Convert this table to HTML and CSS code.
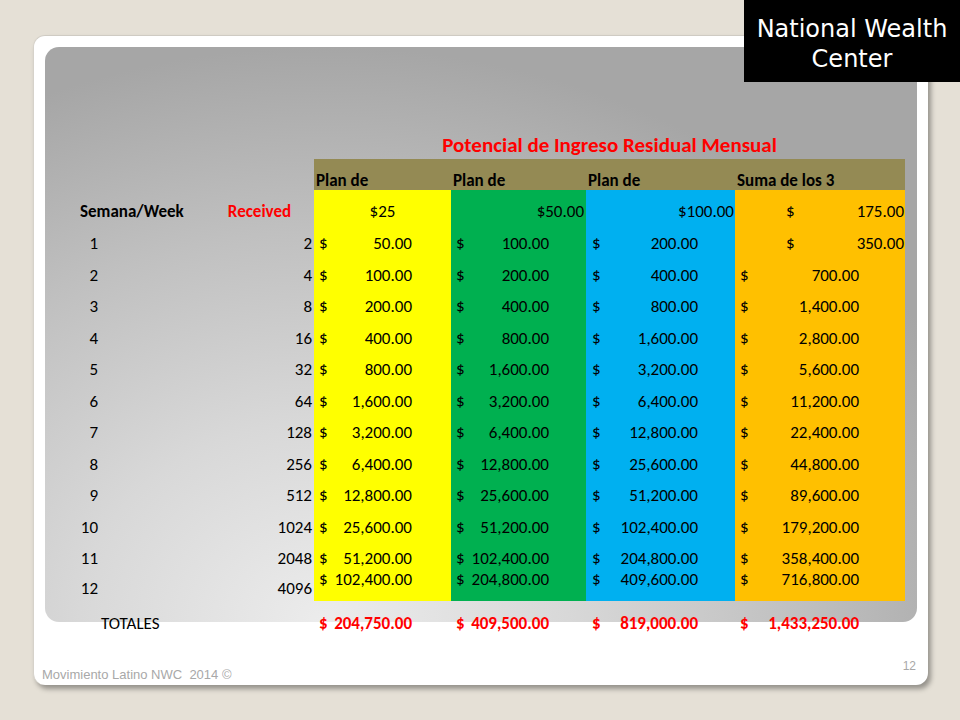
FILE: index.html
```html
<!DOCTYPE html>
<html>
<head>
<meta charset="utf-8">
<link rel="stylesheet" href="styles.css">
</head>
<body>
<div class="logo">National Wealth<br>Center</div>
<div class="card">
  <div class="panel">
    <table class="grid">
      <colgroup>
        <col class="c-a"><col class="c-b"><col class="c-y"><col class="c-g"><col class="c-bl"><col class="c-o">
      </colgroup>
      <tr class="r-title">
        <td></td><td></td>
        <td colspan="4" class="title">Potencial de Ingreso Residual Mensual</td>
      </tr>
      <tr class="r-head">
        <td></td><td></td>
        <td class="olive">Plan de</td>
        <td class="olive">Plan de</td>
        <td class="olive">Plan de</td>
        <td class="olive">Suma de los 3</td>
      </tr>
      <tr class="r-sub">
        <td class="lab-a bold">Semana/Week</td>
        <td class="lab-b bold red ctr">Received</td>
        <td class="y ctr">$25</td>
        <td class="g rgt">$50.00</td>
        <td class="bl rgt">$100.00</td>
        <td class="o"><div class="m wide"><span>$</span><span>175.00</span></div></td>
      </tr>
      <tr class="r">
        <td class="lab-a">1</td><td class="lab-b">2</td>
        <td class="y"><div class="m">$<span>50.00</span></div></td>
        <td class="g"><div class="m">$<span>100.00</span></div></td>
        <td class="bl"><div class="m">$<span>200.00</span></div></td>
        <td class="o"><div class="m wide">$<span>350.00</span></div></td>
      </tr>
      <tr class="r">
        <td class="lab-a">2</td><td class="lab-b">4</td>
        <td class="y"><div class="m">$<span>100.00</span></div></td>
        <td class="g"><div class="m">$<span>200.00</span></div></td>
        <td class="bl"><div class="m">$<span>400.00</span></div></td>
        <td class="o"><div class="m">$<span>700.00</span></div></td>
      </tr>
      <tr class="r">
        <td class="lab-a">3</td><td class="lab-b">8</td>
        <td class="y"><div class="m">$<span>200.00</span></div></td>
        <td class="g"><div class="m">$<span>400.00</span></div></td>
        <td class="bl"><div class="m">$<span>800.00</span></div></td>
        <td class="o"><div class="m">$<span>1,400.00</span></div></td>
      </tr>
      <tr class="r">
        <td class="lab-a">4</td><td class="lab-b">16</td>
        <td class="y"><div class="m">$<span>400.00</span></div></td>
        <td class="g"><div class="m">$<span>800.00</span></div></td>
        <td class="bl"><div class="m">$<span>1,600.00</span></div></td>
        <td class="o"><div class="m">$<span>2,800.00</span></div></td>
      </tr>
      <tr class="r">
        <td class="lab-a">5</td><td class="lab-b">32</td>
        <td class="y"><div class="m">$<span>800.00</span></div></td>
        <td class="g"><div class="m">$<span>1,600.00</span></div></td>
        <td class="bl"><div class="m">$<span>3,200.00</span></div></td>
        <td class="o"><div class="m">$<span>5,600.00</span></div></td>
      </tr>
      <tr class="r">
        <td class="lab-a">6</td><td class="lab-b">64</td>
        <td class="y"><div class="m">$<span>1,600.00</span></div></td>
        <td class="g"><div class="m">$<span>3,200.00</span></div></td>
        <td class="bl"><div class="m">$<span>6,400.00</span></div></td>
        <td class="o"><div class="m">$<span>11,200.00</span></div></td>
      </tr>
      <tr class="r">
        <td class="lab-a">7</td><td class="lab-b">128</td>
        <td class="y"><div class="m">$<span>3,200.00</span></div></td>
        <td class="g"><div class="m">$<span>6,400.00</span></div></td>
        <td class="bl"><div class="m">$<span>12,800.00</span></div></td>
        <td class="o"><div class="m">$<span>22,400.00</span></div></td>
      </tr>
      <tr class="r">
        <td class="lab-a">8</td><td class="lab-b">256</td>
        <td class="y"><div class="m">$<span>6,400.00</span></div></td>
        <td class="g"><div class="m">$<span>12,800.00</span></div></td>
        <td class="bl"><div class="m">$<span>25,600.00</span></div></td>
        <td class="o"><div class="m">$<span>44,800.00</span></div></td>
      </tr>
      <tr class="r">
        <td class="lab-a">9</td><td class="lab-b">512</td>
        <td class="y"><div class="m">$<span>12,800.00</span></div></td>
        <td class="g"><div class="m">$<span>25,600.00</span></div></td>
        <td class="bl"><div class="m">$<span>51,200.00</span></div></td>
        <td class="o"><div class="m">$<span>89,600.00</span></div></td>
      </tr>
      <tr class="r">
        <td class="lab-a">10</td><td class="lab-b">1024</td>
        <td class="y"><div class="m">$<span>25,600.00</span></div></td>
        <td class="g"><div class="m">$<span>51,200.00</span></div></td>
        <td class="bl"><div class="m">$<span>102,400.00</span></div></td>
        <td class="o"><div class="m">$<span>179,200.00</span></div></td>
      </tr>
      <tr class="r">
        <td class="lab-a">11</td><td class="lab-b">2048</td>
        <td class="y"><div class="m">$<span>51,200.00</span></div></td>
        <td class="g"><div class="m">$<span>102,400.00</span></div></td>
        <td class="bl"><div class="m">$<span>204,800.00</span></div></td>
        <td class="o"><div class="m">$<span>358,400.00</span></div></td>
      </tr>
      <tr class="r r-last">
        <td class="lab-a">12</td><td class="lab-b">4096</td>
        <td class="y top"><div class="m">$<span>102,400.00</span></div></td>
        <td class="g top"><div class="m">$<span>204,800.00</span></div></td>
        <td class="bl top"><div class="m">$<span>409,600.00</span></div></td>
        <td class="o top"><div class="m">$<span>716,800.00</span></div></td>
      </tr>
      <tr class="r-tot">
        <td class="lab-tot">TOTALES</td><td></td>
        <td class="ty"><div class="m">$<span>204,750.00</span></div></td>
        <td class="tg"><div class="m">$<span>409,500.00</span></div></td>
        <td class="tbl"><div class="m">$<span>819,000.00</span></div></td>
        <td class="to"><div class="m">$<span>1,433,250.00</span></div></td>
      </tr>
    </table>
  </div>
  <div class="footer">
    <span class="foot-text">Movimiento Latino NWC&nbsp; 2014 ©</span>
    <span class="page-num">12</span>
  </div>
</div>
</body>
</html>
```

FILE: styles.css
```css
html, body {
  margin: 0;
  padding: 0;
}
body {
  width: 960px;
  height: 720px;
  overflow: hidden;
  background: #e5e0d6;
  position: relative;
  font-family: "Carlito", "Lato", "Liberation Sans", sans-serif;
}
.logo {
  position: absolute;
  top: 0;
  right: 0;
  width: 216px;
  height: 82px;
  background: #000;
  color: #fff;
  font-family: "DejaVu Sans", "Liberation Sans", sans-serif;
  font-size: 24px;
  line-height: 30px;
  text-align: center;
  padding-top: 14px;
  box-sizing: border-box;
}
.card {
  margin: 35px 0 0 33px;
  width: 895px;
  height: 650px;
  box-sizing: border-box;
  padding: 11px 11px 0 11px;
  background: #fff;
  border-radius: 12px;
  border-top: 1px solid #cfcbc3;
  border-left: 1px solid #d6d2ca;
  box-shadow: 3px 4px 5px rgba(0,0,0,0.35);
  display: flex;
  flex-direction: column;
}
.panel {
  height: 575px;
  flex: none;
  border-radius: 14px;
  background:
    radial-gradient(ellipse 80% 100% at 32% 100%, #ececec 0%, #d8d8d8 35%, #c0c0c0 68%, #a6a6a6 100%);
  padding: 84px 0 0 26px;
  box-sizing: border-box;
}
.grid {
  border-collapse: collapse;
  table-layout: fixed;
  width: 834px;
  font-size: 17px;
  line-height: 20px;
  color: #000;
}
.grid td {
  padding: 0;
  white-space: nowrap;
  vertical-align: bottom;
}
.c-a { width: 130px; }
.c-b { width: 113px; }
.c-y { width: 137px; }
.c-g { width: 135px; }
.c-bl { width: 149px; }
.c-o { width: 170px; }

.r-title td { height: 26px; padding-bottom: 2px; }
.title {
  text-align: center;
  color: #ff0000;
  font-weight: bold;
  font-size: 21px;
  line-height: 24px;
}
.r-head td { height: 31px; }
.olive {
  background: #948a54;
  font-weight: bold;
  padding: 0 0 0 2px !important;
  line-height: 18px !important;
}
.r-sub td { height: 32px; padding-bottom: 1px; }
.r td { height: 31px; padding-bottom: 0.5px; }
.r-last td { height: 29.5px; padding-bottom: 2px; }
.r-last td.top { vertical-align: top; padding-top: 0; padding-bottom: 0; height: 31.5px; }
.r-tot td { height: 26px; vertical-align: middle; padding-top: 10px; }

.bold { font-weight: bold; }
.red { color: #ff0000; }
.ctr { text-align: center; }
.rgt { text-align: right; }

.lab-a { text-align: right; padding-right: 103px !important; }
.r-sub .lab-a { text-align: left; padding-left: 9px !important; padding-right: 0 !important; }
.lab-b { text-align: right; padding-right: 2px !important; }
.r-sub .lab-b { text-align: center; padding-right: 0 !important; padding-left: 4px !important; }
.lab-tot { padding-left: 30px !important; }

.y { background: #ffff00; }
.g { background: #00b050; }
.bl { background: #00b0f0; }
.o { background: #ffc000; }

.r-sub .g { padding-right: 2px; }
.r-sub .bl { padding-right: 1px; }

.m {
  display: flex;
  justify-content: space-between;
}
.y .m, .ty .m { padding: 0 39px 0 5px; }
.g .m, .tg .m { padding: 0 37px 0 5px; }
.bl .m, .tbl .m { padding: 0 37px 0 6px; }
.o .m, .to .m { padding: 0 46px 0 5px; }
.o .m.wide { padding: 0 1px 0 51px; }

.r-tot .m {
  color: #ff0000;
  font-weight: bold;
}

.footer {
  margin-top: auto;
  display: flex;
  justify-content: space-between;
  align-items: flex-end;
  font-family: "Liberation Sans", Arial, sans-serif;
  color: #a8a8a8;
  padding-bottom: 3px;
}
.foot-text {
  font-size: 13px;
  margin-left: -3px;
}
.page-num {
  font-size: 12px;
  margin-right: 1px;
  margin-bottom: 9px;
}
```
